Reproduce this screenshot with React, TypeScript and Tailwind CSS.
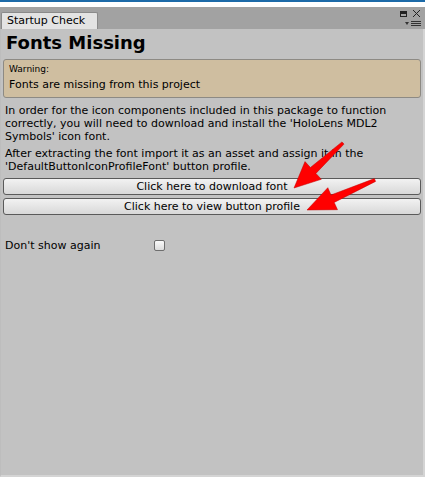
import React from "react";

function arrow(tx: number, ty: number, hx: number, hy: number, shaftW: number, headLen: number, headW: number, tailW: number) {
  const dx = hx - tx;
  const dy = hy - ty;
  const len = Math.sqrt(dx * dx + dy * dy);
  const ux = dx / len;
  const uy = dy / len;
  const px = -uy;
  const py = ux;
  const bx = hx - ux * headLen;
  const by = hy - uy * headLen;
  const pts = [
    [tx + px * tailW / 2, ty + py * tailW / 2],
    [bx + px * shaftW / 2, by + py * shaftW / 2],
    [bx + px * headW / 2, by + py * headW / 2],
    [hx, hy],
    [bx - px * headW / 2, by - py * headW / 2],
    [bx - px * shaftW / 2, by - py * shaftW / 2],
    [tx - px * tailW / 2, ty - py * tailW / 2],
  ];
  return pts.map((p) => `${p[0].toFixed(1)},${p[1].toFixed(1)}`).join(" ");
}

export default function App() {
  return (
    <div
      className="relative w-[425px] h-[479px] bg-white overflow-hidden text-black"
      style={{ fontFamily: '"DejaVu Sans", Verdana, sans-serif' }}
    >
      <div className="h-[2px] bg-[#1c6aa8]" />
      <div className="h-[5px] bg-white" />
      <div className="flex h-[22px] bg-[#a2a2a2] items-end relative">
        <div className="ml-[1px] h-[17px] w-[97px] bg-[#e3e3e3] border border-b-0 border-[#8a8a8a] rounded-t-[2px] text-[11px] leading-[16px] pl-[5px]">
          Startup Check
        </div>
        <div className="absolute right-[4px] top-[2px] flex flex-col items-end">
          <div className="flex items-center gap-[5px]">
            <div className="w-[7px] h-[6px] border-[1.5px] border-t-[3px] border-[#222]" />
            <svg width="9" height="9" viewBox="0 0 9 9">
              <path d="M1 1 L8 8 M8 1 L1 8" stroke="#222" strokeWidth="1" />
            </svg>
          </div>
          <svg width="16" height="7" viewBox="0 0 16 7" className="mt-[2px]">
            <path d="M0 2 L4 2 L2 5 Z" fill="#333" />
            <path d="M6 1.5 H16 M6 3.5 H16 M6 5.5 H16" stroke="#333" strokeWidth="1" />
          </svg>
        </div>
      </div>
      <div className="h-[448px] mx-0 bg-[#c2c2c2] border-r-[2px] border-b-[2px] border-[#d4d4d4] border-l border-l-[#bdbdbd] px-[2px]">
        <div className="text-[18px] font-bold leading-[24px] pl-[3px] pt-[2px]">Fonts Missing</div>
        <div className="mt-[4px] h-[39px] bg-[#cfbea0] border border-[#8d8a84] rounded-[3px] px-[5px]">
          <div className="text-[9px] leading-[10px] pt-[4px]">Warning:</div>
          <div className="text-[11px] leading-[13px] mt-[4px]">Fonts are missing from this project</div>
        </div>
        <div className="text-[11px] leading-[13px] pl-[2px] mt-[6px]">
          In order for the icon components included in this package to function correctly, you will need to download and install the 'HoloLens MDL2 Symbols' icon font.
        </div>
        <div className="text-[11px] leading-[13px] pl-[2px] mt-[4px]">
          After extracting the font import it as an asset and assign it in the 'DefaultButtonIconProfileFont' button profile.
        </div>
        <div className="mt-[5px] flex flex-col gap-[3px]">
          <div className="h-[17px] border border-[#5a5a5a] rounded-[3px] bg-gradient-to-b from-[#f2f2f2] to-[#d8d8d8] text-[11px] leading-[15px] text-center">
            Click here to download font
          </div>
          <div className="h-[17px] border border-[#5a5a5a] rounded-[3px] bg-gradient-to-b from-[#f2f2f2] to-[#d8d8d8] text-[11px] leading-[15px] text-center">
            Click here to view button profile
          </div>
        </div>
        <div className="mt-[24px] flex items-center pl-[2px]">
          <div className="w-[149px] text-[11px] leading-[13px]">Don't show again</div>
          <div className="w-[11px] h-[11px] border border-[#6e6e6e] rounded-[2px] bg-gradient-to-b from-[#fafafa] to-[#dcdcdc]" />
        </div>
      </div>
      <svg className="absolute left-0 top-0 pointer-events-none" width="425" height="479">
        <polygon points={arrow(343, 143, 294, 188, 8, 26, 24, 3)} fill="#ff0000" stroke="#c00000" strokeWidth="0.5" />
        <polygon points={arrow(375, 180, 307, 210, 8, 28, 24, 3)} fill="#ff0000" stroke="#c00000" strokeWidth="0.5" />
      </svg>
    </div>
  );
}
